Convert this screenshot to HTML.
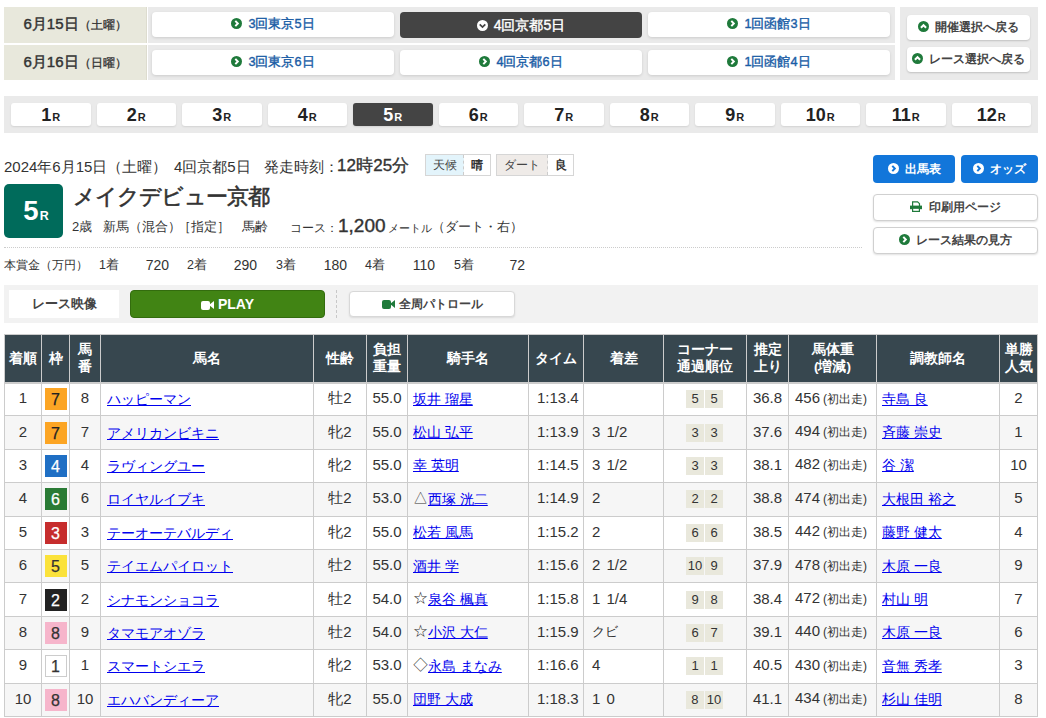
<!DOCTYPE html>
<html lang="ja">
<head>
<meta charset="utf-8">
<style>
*{box-sizing:border-box;margin:0;padding:0}
html,body{width:1046px;height:718px;overflow:hidden;background:#fff}
body{font-family:"Liberation Sans",sans-serif;color:#333;position:relative}
.abs{position:absolute}
/* top date nav */
.datecell{position:absolute;left:4px;width:143px;background:#e8e8dc;border-right:1px solid #dddccf;font-size:15px;color:#333;text-align:center;-webkit-text-stroke:0.45px #333}
.datecell small{font-size:12px;-webkit-text-stroke:0.3px #333}
.greycell{position:absolute;left:148px;width:747px;background:#eaeaea}
.kbtn{position:absolute;height:25px;background:#fff;border-radius:4px;box-shadow:0 1px 3px rgba(0,0,0,.13);font-size:12.7px;font-weight:normal;-webkit-text-stroke:0.4px currentColor;color:#1a5da6;text-align:center;line-height:25px;width:242px}
.kbtn.cur{background:#444;color:#fff;box-shadow:none;height:26px;line-height:26px;font-size:14px}
.ico{display:inline-block;width:10.5px;height:10.5px;border-radius:50%;background:#1f7a3b;position:relative;vertical-align:-1px;margin-right:6px}
.ico:after{content:"";position:absolute;left:2.5px;top:3.2px;width:3.5px;height:3.5px;border-top:2px solid #fff;border-right:2px solid #fff;transform:rotate(45deg)}
.ico.down{background:#fff}
.ico.down:after{border-color:#444;transform:rotate(135deg);left:3.3px;top:2.2px}
.ico.up:after{transform:rotate(-45deg);left:3.3px;top:4.2px}
.ico.w{background:#fff}
.ico.w:after{border-color:#1a72d6}
.rbox{position:absolute;left:900px;top:7px;width:138px;height:73px;background:#eaeaea}
.rbtn{position:absolute;left:7px;width:123px;height:25px;background:#fff;border-radius:4px;box-shadow:0 1px 2px rgba(0,0,0,.18);font-size:12px;font-weight:bold;color:#444;line-height:25px;text-align:center;white-space:nowrap}
/* race nums */
.racebar{position:absolute;left:4px;top:96px;width:1034px;height:37px;background:#eaeaea;padding:0 4px;display:flex}
.racebar div{flex:1;padding:7px 3px 0 3px}
.racebar a{display:block;height:23px;background:#fff;border-radius:3px;box-shadow:0 1px 2px rgba(0,0,0,.1);text-align:center;font-weight:bold;font-size:18px;line-height:24px;color:#222;text-decoration:none}
.racebar a small{font-size:11px;margin-left:1px}
.racebar a.cur{background:#444;color:#fff}
.ic{display:inline-block;vertical-align:-1px;margin-right:6px}
</style>
</head>
<body>
<!-- date nav -->
<div class="datecell" style="top:7px;height:36px;line-height:34px">6月15日<small>（土曜）</small></div>
<div class="datecell" style="top:45px;height:35px;line-height:33px">6月16日<small>（日曜）</small></div>
<div class="greycell" style="top:7px;height:36px"></div>
<div class="greycell" style="top:45px;height:35px"></div>
<div class="kbtn" style="left:152px;top:12px"><svg class="ic" width="11" height="11" viewBox="0 0 11 11"><circle cx="5.5" cy="5.5" r="5.5" fill="#1f7a3b"/><path d="M4.3 2.9L6.8 5.5L4.3 8.1" fill="none" stroke="#fff" stroke-width="2" stroke-linecap="butt" stroke-linejoin="miter"/></svg>3回東京5日</div>
<div class="kbtn cur" style="left:400px;top:12px"><svg class="ic" width="11" height="11" viewBox="0 0 11 11"><circle cx="5.5" cy="5.5" r="5.5" fill="#fff"/><path d="M2.7 4.3L5.5 7L8.3 4.3" fill="none" stroke="#444" stroke-width="1.7" stroke-linecap="butt" stroke-linejoin="miter"/></svg>4回京都5日</div>
<div class="kbtn" style="left:648px;top:12px"><svg class="ic" width="11" height="11" viewBox="0 0 11 11"><circle cx="5.5" cy="5.5" r="5.5" fill="#1f7a3b"/><path d="M4.3 2.9L6.8 5.5L4.3 8.1" fill="none" stroke="#fff" stroke-width="2" stroke-linecap="butt" stroke-linejoin="miter"/></svg>1回函館3日</div>
<div class="kbtn" style="left:152px;top:50px"><svg class="ic" width="11" height="11" viewBox="0 0 11 11"><circle cx="5.5" cy="5.5" r="5.5" fill="#1f7a3b"/><path d="M4.3 2.9L6.8 5.5L4.3 8.1" fill="none" stroke="#fff" stroke-width="2" stroke-linecap="butt" stroke-linejoin="miter"/></svg>3回東京6日</div>
<div class="kbtn" style="left:400px;top:50px"><svg class="ic" width="11" height="11" viewBox="0 0 11 11"><circle cx="5.5" cy="5.5" r="5.5" fill="#1f7a3b"/><path d="M4.3 2.9L6.8 5.5L4.3 8.1" fill="none" stroke="#fff" stroke-width="2" stroke-linecap="butt" stroke-linejoin="miter"/></svg>4回京都6日</div>
<div class="kbtn" style="left:648px;top:50px"><svg class="ic" width="11" height="11" viewBox="0 0 11 11"><circle cx="5.5" cy="5.5" r="5.5" fill="#1f7a3b"/><path d="M4.3 2.9L6.8 5.5L4.3 8.1" fill="none" stroke="#fff" stroke-width="2" stroke-linecap="butt" stroke-linejoin="miter"/></svg>1回函館4日</div>
<div class="rbox">
  <div class="rbtn" style="top:8px"><svg class="ic" width="11" height="11" viewBox="0 0 11 11"><circle cx="5.5" cy="5.5" r="5.5" fill="#1f7a3b"/><path d="M2.9 6.7L5.5 4.2L8.1 6.7" fill="none" stroke="#fff" stroke-width="2" stroke-linecap="butt" stroke-linejoin="miter"/></svg>開催選択へ戻る</div>
  <div class="rbtn" style="top:40px"><svg class="ic" width="11" height="11" viewBox="0 0 11 11"><circle cx="5.5" cy="5.5" r="5.5" fill="#1f7a3b"/><path d="M2.9 6.7L5.5 4.2L8.1 6.7" fill="none" stroke="#fff" stroke-width="2" stroke-linecap="butt" stroke-linejoin="miter"/></svg>レース選択へ戻る</div>
</div>

<!-- race numbers -->
<div class="racebar">
  <div><a>1<small>R</small></a></div>
  <div><a>2<small>R</small></a></div>
  <div><a>3<small>R</small></a></div>
  <div><a>4<small>R</small></a></div>
  <div><a class="cur">5<small>R</small></a></div>
  <div><a>6<small>R</small></a></div>
  <div><a>7<small>R</small></a></div>
  <div><a>8<small>R</small></a></div>
  <div><a>9<small>R</small></a></div>
  <div><a>10<small>R</small></a></div>
  <div><a>11<small>R</small></a></div>
  <div><a>12<small>R</small></a></div>
</div>


<style>
.dl{position:absolute;left:4px;top:157px;font-size:15px;color:#333;white-space:nowrap;line-height:20px}
.dl b{font-size:17px;font-weight:normal;-webkit-text-stroke:0.35px #333;letter-spacing:0.1px}
.wbox{position:absolute;top:154px;height:22px;border:1px solid #d6d6d6;display:flex;font-size:12px;line-height:20px}
.wbox span{display:block;text-align:center}
.badge{position:absolute;left:4px;top:184px;width:59px;height:54px;background:#006b5b;border-radius:5px;color:#fff;font-weight:bold;text-align:center;font-size:27.5px;line-height:54px;padding-left:5px}
.badge small{font-size:12.5px;margin-left:1px}
.title{position:absolute;left:73px;top:183px;font-size:21.5px;line-height:28px;color:#333;white-space:nowrap;letter-spacing:-0.9px;-webkit-text-stroke:0.6px #333}
.cond{position:absolute;left:72px;top:217px;font-size:13px;line-height:20px;white-space:nowrap;color:#333}
.cond b{font-size:18px;font-weight:normal}
.dot{position:absolute;left:4px;top:247px;width:858px;border-top:1px dotted #ccc}
.prize{position:absolute;left:4px;top:255px;font-size:12.5px;line-height:20px;white-space:nowrap;color:#333}
.bbtn{position:absolute;top:155px;height:28px;background:#1276da;border-radius:4px;color:#fff;font-weight:bold;font-size:12px;line-height:28px;text-align:center}
.wbtn{position:absolute;left:873px;width:165px;height:27px;background:#fff;border:1px solid #d0d0d0;border-radius:4px;box-shadow:0 1px 2px rgba(0,0,0,.12);font-size:12px;font-weight:bold;color:#444;line-height:25px;text-align:center}
.vbar{position:absolute;left:4px;top:285px;width:1034px;height:38px;background:#f2f2f2}
.vlabel{position:absolute;left:5px;top:5px;width:110px;height:28px;background:#fff;font-size:13px;font-weight:bold;color:#444;line-height:28px;text-align:center}
.play{position:absolute;left:126px;top:5px;width:195px;height:28px;background:#418414;border:1px solid #336c0e;border-radius:4px;color:#fff;font-weight:bold;font-size:14px;line-height:26px;text-align:center}
.vsep{position:absolute;left:332px;top:5px;height:28px;border-left:1px dashed #c8c8c8}
.patrol{position:absolute;left:345px;top:6px;width:166px;height:26px;background:#fff;border:1px solid #d8d8d8;border-radius:4px;box-shadow:0 1px 2px rgba(0,0,0,.1);font-size:12px;font-weight:bold;color:#444;line-height:24px;text-align:center}
.cam{display:inline-block;width:9px;height:9px;background:#fff;border-radius:2px;position:relative;margin-right:8px;vertical-align:-1px}
.cam:after{content:"";position:absolute;left:8px;top:0px;border-style:solid;border-width:4.5px 5px 4.5px 0;border-color:transparent #fff transparent transparent}
.cam.g{background:#1f7a3b}
.cam.g:after{border-right-color:#1f7a3b}
</style>
<div class="dl">2024年6月15日（土曜）</div><div class="dl" style="left:174px">4回京都5日</div><div class="dl" style="left:264px">発走時刻：</div><div class="dl" style="left:337px;top:156px"><b>12時25分</b></div>
<div class="wbox" style="left:425px;width:66px"><span style="width:38px;background:#e3f4fb;border-right:1px dashed #ccc;color:#444">天候</span><span style="flex:1;font-weight:bold">晴</span></div>
<div class="wbox" style="left:496px;width:78px"><span style="width:51px;background:#efebe8;border-right:1px dashed #ccc;color:#444">ダート</span><span style="flex:1;font-weight:bold">良</span></div>
<div class="badge">5<small>R</small></div>
<div class="title">メイクデビュー京都</div>
<div class="cond" style="left:72px">2歳</div>
<div class="cond" style="left:103px">新馬（混合）</div>
<div class="cond" style="left:178px">［指定］</div>
<div class="cond" style="left:242px">馬齢</div>
<div class="cond" style="left:290px;font-size:12.4px;top:218px">コース：</div>
<div class="cond" style="left:338px;top:215px;font-size:19px;line-height:22px;-webkit-text-stroke:0.4px #333">1,200</div>
<div class="cond" style="left:388px;top:218px;font-size:10.7px">メートル</div>
<div class="cond" style="left:432px">（ダート・右）</div>
<div class="dot"></div>
<div class="prize" style="font-size:11.5px">本賞金（万円）</div><div class="prize" style="left:99px">1着</div><div class="prize" style="left:109px;width:60px;text-align:right;font-size:14px">720</div><div class="prize" style="left:187px">2着</div><div class="prize" style="left:197px;width:60px;text-align:right;font-size:14px">290</div><div class="prize" style="left:276px">3着</div><div class="prize" style="left:287px;width:60px;text-align:right;font-size:14px">180</div><div class="prize" style="left:365px">4着</div><div class="prize" style="left:375px;width:60px;text-align:right;font-size:14px">110</div><div class="prize" style="left:454px">5着</div><div class="prize" style="left:465px;width:60px;text-align:right;font-size:14px">72</div>
<div class="bbtn" style="left:873px;width:82px"><svg class="ic" width="11" height="11" viewBox="0 0 11 11"><circle cx="5.5" cy="5.5" r="5.5" fill="#fff"/><path d="M4.3 2.9L6.8 5.5L4.3 8.1" fill="none" stroke="#1276da" stroke-width="2" stroke-linecap="butt" stroke-linejoin="miter"/></svg>出馬表</div>
<div class="bbtn" style="left:961px;width:77px"><svg class="ic" width="11" height="11" viewBox="0 0 11 11"><circle cx="5.5" cy="5.5" r="5.5" fill="#fff"/><path d="M4.3 2.9L6.8 5.5L4.3 8.1" fill="none" stroke="#1276da" stroke-width="2" stroke-linecap="butt" stroke-linejoin="miter"/></svg>オッズ</div>
<div class="wbtn" style="top:194px"><svg width="12" height="11" viewBox="0 0 12 11" style="vertical-align:-1px;margin-right:7px"><path d="M2.6 5V0.8h5l1.9 1.9V5" fill="#fff" stroke="#1f7a3b" stroke-width="1.2"/><rect x="0" y="4.6" width="12" height="3.6" fill="#1f7a3b"/><rect x="2.6" y="7.2" width="6.8" height="3.2" fill="#fff" stroke="#1f7a3b" stroke-width="1.2"/></svg>印刷用ページ</div>
<div class="wbtn" style="top:227px"><svg class="ic" width="11" height="11" viewBox="0 0 11 11"><circle cx="5.5" cy="5.5" r="5.5" fill="#1f7a3b"/><path d="M4.3 2.9L6.8 5.5L4.3 8.1" fill="none" stroke="#fff" stroke-width="2" stroke-linecap="butt" stroke-linejoin="miter"/></svg>レース結果の見方</div>
<div class="vbar">
  <div class="vlabel">レース映像</div>
  <div class="play"><span class="cam"></span>PLAY</div>
  <div class="vsep"></div>
  <div class="patrol"><span class="cam g"></span>全周パトロール</div>
</div>


<style>
.res{position:absolute;left:4px;top:334px;width:1033px;border-collapse:collapse;table-layout:fixed;font-size:15px;color:#333}
.res th{background:#37474f;color:#fff;font-size:13.5px;font-weight:bold;line-height:17px;height:48px;border:1px solid #ccc;border-bottom-width:2px;text-align:center;padding:0}
.res td{border:1px solid #ccc;height:33.4px;padding:0 8px 2px;white-space:nowrap;line-height:20px}
.res tr:nth-child(odd) td{background:#f6f6f6}
.res td.c{text-align:center;padding:0 0 2px}
.res a.j{font-size:13.6px}
.res a{color:#00e;text-decoration:underline;font-size:14.2px;position:relative;top:1px}
.wk{display:inline-block;width:22px;height:22px;line-height:24px;text-align:center;font-size:16px;position:relative;top:1px;vertical-align:middle;-webkit-text-stroke:0.25px currentColor}
.w1{background:#fff;border:1px solid #ccc;line-height:22px}
.w2{background:#222;color:#fff}
.w3{background:#c62d2d;color:#fff}
.w4{background:#1f6fc4;color:#fff}
.w5{background:#fbe23a;color:#333}
.w6{background:#2a7b35;color:#fff}
.w7{background:#fca524;color:#222}
.w8{background:#f6b5cb;color:#333}
.cn{display:inline-block;min-width:18px;height:18px;line-height:18px;background:#e9e8dc;font-size:13px;text-align:center;margin-right:1px;padding:0 2px}
.sm{font-size:12px;margin-left:3px}
.res td.nm{padding-left:6px}
.res td.jk{padding-left:5px}
.res td.tr{padding-left:5px}
.res td.bw{padding-left:6px}
.res td.mg{word-spacing:2px}
</style>
<table class="res"><colgroup><col style="width:37px"><col style="width:28px"><col style="width:31px"><col style="width:213px"><col style="width:53px"><col style="width:41px"><col style="width:121px"><col style="width:55px"><col style="width:80px"><col style="width:83px"><col style="width:42px"><col style="width:88px"><col style="width:123px"><col style="width:38px"></colgroup>
<tr><th>着順</th><th>枠</th><th>馬<br>番</th><th>馬名</th><th>性齢</th><th>負担<br>重量</th><th>騎手名</th><th>タイム</th><th>着差</th><th>コーナー<br>通過順位</th><th>推定<br>上り</th><th>馬体重<br>(増減)</th><th>調教師名</th><th>単勝<br>人気</th></tr>
<tr><td class="c">1</td><td class="c"><span class="wk w7">7</span></td><td class="c">8</td><td class="nm"><a>ハッピーマン</a></td><td class="c">牡2</td><td class="c">55.0</td><td class="jk"><a class="j">坂井 瑠星</a></td><td>1:13.4</td><td class="mg"></td><td class="c"><span class="cn">5</span><span class="cn">5</span></td><td class="c">36.8</td><td class="bw">456<span class="sm">(初出走)</span></td><td class="tr"><a class="j">寺島 良</a></td><td class="c">2</td></tr>
<tr><td class="c">2</td><td class="c"><span class="wk w7">7</span></td><td class="c">7</td><td class="nm"><a>アメリカンビキニ</a></td><td class="c">牝2</td><td class="c">55.0</td><td class="jk"><a class="j">松山 弘平</a></td><td>1:13.9</td><td class="mg">3 1/2</td><td class="c"><span class="cn">3</span><span class="cn">3</span></td><td class="c">37.6</td><td class="bw">494<span class="sm">(初出走)</span></td><td class="tr"><a class="j">斉藤 崇史</a></td><td class="c">1</td></tr>
<tr><td class="c">3</td><td class="c"><span class="wk w4">4</span></td><td class="c">4</td><td class="nm"><a>ラヴィングユー</a></td><td class="c">牝2</td><td class="c">55.0</td><td class="jk"><a class="j">幸 英明</a></td><td>1:14.5</td><td class="mg">3 1/2</td><td class="c"><span class="cn">3</span><span class="cn">3</span></td><td class="c">38.1</td><td class="bw">482<span class="sm">(初出走)</span></td><td class="tr"><a class="j">谷 潔</a></td><td class="c">10</td></tr>
<tr><td class="c">4</td><td class="c"><span class="wk w6">6</span></td><td class="c">6</td><td class="nm"><a>ロイヤルイブキ</a></td><td class="c">牡2</td><td class="c">53.0</td><td class="jk">△<a class="j">西塚 洸二</a></td><td>1:14.9</td><td class="mg">2</td><td class="c"><span class="cn">2</span><span class="cn">2</span></td><td class="c">38.8</td><td class="bw">474<span class="sm">(初出走)</span></td><td class="tr"><a class="j">大根田 裕之</a></td><td class="c">5</td></tr>
<tr><td class="c">5</td><td class="c"><span class="wk w3">3</span></td><td class="c">3</td><td class="nm"><a>テーオーテバルディ</a></td><td class="c">牝2</td><td class="c">55.0</td><td class="jk"><a class="j">松若 風馬</a></td><td>1:15.2</td><td class="mg">2</td><td class="c"><span class="cn">6</span><span class="cn">6</span></td><td class="c">38.5</td><td class="bw">442<span class="sm">(初出走)</span></td><td class="tr"><a class="j">藤野 健太</a></td><td class="c">4</td></tr>
<tr><td class="c">6</td><td class="c"><span class="wk w5">5</span></td><td class="c">5</td><td class="nm"><a>テイエムパイロット</a></td><td class="c">牡2</td><td class="c">55.0</td><td class="jk"><a class="j">酒井 学</a></td><td>1:15.6</td><td class="mg">2 1/2</td><td class="c"><span class="cn">10</span><span class="cn">9</span></td><td class="c">37.9</td><td class="bw">478<span class="sm">(初出走)</span></td><td class="tr"><a class="j">木原 一良</a></td><td class="c">9</td></tr>
<tr><td class="c">7</td><td class="c"><span class="wk w2">2</span></td><td class="c">2</td><td class="nm"><a>シナモンショコラ</a></td><td class="c">牡2</td><td class="c">54.0</td><td class="jk">☆<a class="j">泉谷 楓真</a></td><td>1:15.8</td><td class="mg">1 1/4</td><td class="c"><span class="cn">9</span><span class="cn">8</span></td><td class="c">38.4</td><td class="bw">472<span class="sm">(初出走)</span></td><td class="tr"><a class="j">村山 明</a></td><td class="c">7</td></tr>
<tr><td class="c">8</td><td class="c"><span class="wk w8">8</span></td><td class="c">9</td><td class="nm"><a>タマモアオゾラ</a></td><td class="c">牡2</td><td class="c">54.0</td><td class="jk">☆<a class="j">小沢 大仁</a></td><td>1:15.9</td><td class="mg"><span style="font-size:13px">クビ</span></td><td class="c"><span class="cn">6</span><span class="cn">7</span></td><td class="c">39.1</td><td class="bw">440<span class="sm">(初出走)</span></td><td class="tr"><a class="j">木原 一良</a></td><td class="c">6</td></tr>
<tr><td class="c">9</td><td class="c"><span class="wk w1">1</span></td><td class="c">1</td><td class="nm"><a>スマートシエラ</a></td><td class="c">牝2</td><td class="c">53.0</td><td class="jk">◇<a class="j">永島 まなみ</a></td><td>1:16.6</td><td class="mg">4</td><td class="c"><span class="cn">1</span><span class="cn">1</span></td><td class="c">40.5</td><td class="bw">430<span class="sm">(初出走)</span></td><td class="tr"><a class="j">音無 秀孝</a></td><td class="c">3</td></tr>
<tr><td class="c">10</td><td class="c"><span class="wk w8">8</span></td><td class="c">10</td><td class="nm"><a>エハバンディーア</a></td><td class="c">牝2</td><td class="c">55.0</td><td class="jk"><a class="j">団野 大成</a></td><td>1:18.3</td><td class="mg">1 0</td><td class="c"><span class="cn">8</span><span class="cn">10</span></td><td class="c">41.1</td><td class="bw">434<span class="sm">(初出走)</span></td><td class="tr"><a class="j">杉山 佳明</a></td><td class="c">8</td></tr>
</table>
</body>
</html>
